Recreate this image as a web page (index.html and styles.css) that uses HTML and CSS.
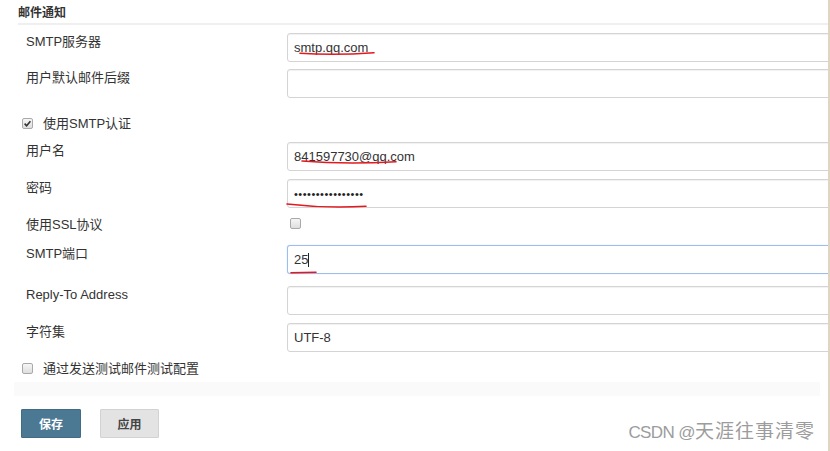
FILE: index.html
```html
<!DOCTYPE html>
<html lang="zh-CN">
<head>
<meta charset="utf-8">
<title>邮件通知</title>
<link rel="stylesheet" href="styles.css">
</head>
<body>
<div class="page">
  <div class="title">邮件通知</div>

  <div class="form">
    <div class="row h36">
      <label class="lbl">SMTP服务器</label>
      <input class="field" type="text" value="smtp.qq.com">
    </div>
    <div class="row h37">
      <label class="lbl">用户默认邮件后缀</label>
      <input class="field" type="text" value="">
    </div>
    <div class="check-row auth">
      <span class="cb checked"><svg viewBox="0 0 11 11" width="11" height="11"><path d="M2.6 5.6 L4.6 7.7 L8.4 3.2" fill="none" stroke="#333" stroke-width="1.6"/></svg></span>
      <span class="cb-text">使用SMTP认证</span>
    </div>
    <div class="row h37">
      <label class="lbl">用户名</label>
      <input class="field" type="text" value="841597730@qq.com">
    </div>
    <div class="row h37">
      <label class="lbl">密码</label>
      <input class="field pwd" type="password" value="abcdefghijklmnop">
    </div>
    <div class="row ssl">
      <label class="lbl">使用SSL协议</label>
      <span class="cb ssl-cb"></span>
    </div>
    <div class="row h41">
      <label class="lbl">SMTP端口</label>
      <div class="field-wrap">
        <input class="field focus" type="text" value="25">
        <span class="caret"></span>
      </div>
    </div>
    <div class="row h37">
      <label class="lbl">Reply-To Address</label>
      <input class="field" type="text" value="">
    </div>
    <div class="row h37">
      <label class="lbl">字符集</label>
      <input class="field" type="text" value="UTF-8">
    </div>
    <div class="check-row test">
      <span class="cb"></span>
      <span class="cb-text">通过发送测试邮件测试配置</span>
    </div>
  </div>

  <div class="band"></div>

  <div class="buttons">
    <button class="btn primary" type="button">保存</button>
    <button class="btn secondary" type="button">应用</button>
  </div>

  <div class="wm"><span class="wm-latin">CSDN @</span><span class="wm-cjk">天涯往事清零</span></div>

  <svg class="marks" width="828" height="451" viewBox="0 0 828 451">
    <path d="M300 53.3 Q 335 55.5 374 52.7" />
    <path d="M302 161 Q 345 164.5 396 161.7" />
    <path d="M287 204 Q 325 208.5 366 206.3" />
    <path d="M291 272.7 L 316 272.3" />
  </svg>
</div>
</body>
</html>
```

FILE: styles.css
```css
html, body {
  margin: 0;
  padding: 0;
  background: #ffffff;
}

body {
  width: 830px;
  height: 451px;
  overflow: hidden;
  font-family: "Liberation Sans", Arial, "Noto Sans CJK SC", sans-serif;
  font-size: 13px;
  color: #333333;
}

.page {
  position: relative;
  width: 828px;
  height: 451px;
  overflow: hidden;
  border-right: 2px solid #e0d5c3;
}

.title {
  margin-left: 18px;
  padding-top: 5px;
  padding-bottom: 1px;
  line-height: 17px;
  font-size: 12px;
  font-weight: bold;
  color: #333333;
  border-bottom: 2px solid #efefef;
}

.form {
  display: flex;
  flex-direction: column;
  margin-top: 8px;
}

.row {
  display: flex;
  align-items: flex-start;
}

.h36 { height: 36px; }
.h37 { height: 37px; }
.h41 { height: 41px; }

.lbl {
  box-sizing: border-box;
  width: 287px;
  flex: none;
  padding-left: 26px;
  line-height: 17px;
  padding-top: 0;
  color: #333333;
}

.field {
  box-sizing: border-box;
  flex: none;
  width: 560px;
  height: 29px;
  margin: 0;
  padding: 0 6px;
  border: 1px solid #d4d4d4;
  border-radius: 3px;
  background: #ffffff;
  box-shadow: inset 0 1px 1px rgba(0, 0, 0, 0.06);
  font-family: "Liberation Sans", Arial, "Noto Sans CJK SC", sans-serif;
  font-size: 13px;
  color: #333333;
  outline: none;
}

.pwd {
  font-size: 11px;
  letter-spacing: 0.5px;
  color: #222222;
}

.field.focus {
  border-color: #9dbdee;
  box-shadow: 0 0 1px rgba(102, 150, 233, 0.6);
}

.field-wrap {
  position: relative;
  flex: none;
}

.caret {
  position: absolute;
  left: 21px;
  top: 8px;
  width: 1px;
  height: 14px;
  background: #222222;
}

.check-row {
  display: flex;
  align-items: center;
  padding-left: 22px;
}

.check-row.auth {
  height: 36px;
  padding-bottom: 1px;
  box-sizing: border-box;
}

.check-row.test {
  height: 20px;
  padding-bottom: 4px;
  box-sizing: border-box;
}

.cb {
  box-sizing: border-box;
  display: inline-block;
  flex: none;
  width: 11px;
  height: 11px;
  border: 1px solid #a9a9a9;
  border-radius: 2px;
  background: linear-gradient(#f6f6f6, #dedede);
  position: relative;
}

.cb svg {
  position: absolute;
  left: -1px;
  top: -1px;
}

.cb-text {
  margin-left: 10px;
  line-height: 17px;
}

.row.ssl {
  height: 29px;
}

.ssl-cb {
  margin-left: 3px;
  margin-top: 2px;
}

.band {
  margin-top: 2px;
  margin-left: 14px;
  width: 806px;
  height: 14px;
  background: #fafafa;
}

.buttons {
  display: flex;
  margin-top: 13px;
  padding-left: 21px;
  gap: 19px;
}

.btn {
  box-sizing: border-box;
  height: 29px;
  margin: 0;
  padding: 0;
  border-radius: 1px;
  font-family: "Liberation Sans", Arial, "Noto Sans CJK SC", sans-serif;
  font-size: 12px;
  font-weight: bold;
  cursor: pointer;
}

.btn.primary {
  width: 60px;
  background: #4b7892;
  border: 1px solid #426c84;
  color: #ffffff;
}

.btn.secondary {
  width: 59px;
  background: #e3e3e3;
  border: 1px solid #d2d2d2;
  color: #444444;
}

.wm {
  position: absolute;
  right: 13px;
  top: 421px;
  color: #9c9c9c;
  white-space: nowrap;
  line-height: 22px;
}

.wm-latin {
  font-size: 17px;
  letter-spacing: -0.6px;
}

.wm-cjk {
  font-size: 19px;
  letter-spacing: 1px;
}

.marks {
  position: absolute;
  left: 0;
  top: 0;
  pointer-events: none;
}

.marks path {
  fill: none;
  stroke: #e3191f;
  stroke-width: 1.6;
  stroke-linecap: round;
}
```
